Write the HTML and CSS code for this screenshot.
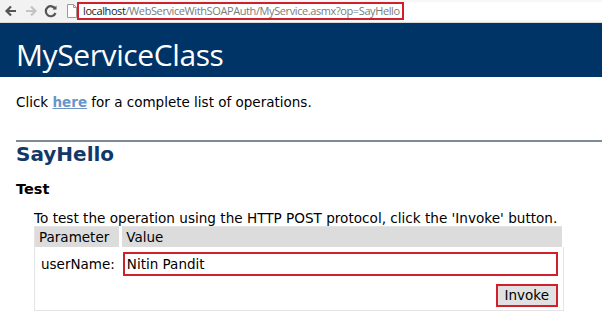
FILE: index.html
```html
<!DOCTYPE html>
<html lang="en">
<head>
    <meta charset="UTF-8">
    <meta name="viewport" content="width=device-width, initial-scale=1.0">
    <title>MyServiceClass Web Service</title>
    <link rel="stylesheet" href="styles.css">
</head>
<body>
    <div class="toolbar">
        <div class="nav">
            <svg class="nav-icon" width="14" height="14" viewBox="0 0 14 14">
                <path d="M12 7H3M7 2.5L2.5 7L7 11.5" fill="none" stroke="#555" stroke-width="2.2"/>
            </svg>
            <svg class="nav-icon" width="14" height="14" viewBox="0 0 14 14">
                <path d="M2 7H11M7 2.5L11.5 7L7 11.5" fill="none" stroke="#c4c4c4" stroke-width="2.2"/>
            </svg>
            <svg class="nav-icon" width="14" height="14" viewBox="0 0 14 14">
                <path d="M11.3 5A5 5 0 1 0 11.5 9" fill="none" stroke="#555" stroke-width="2.2"/>
                <path d="M8.5 5.5H12.5V1.5Z" fill="#555"/>
            </svg>
            <svg class="page-icon" width="10" height="14" viewBox="0 0 10 14">
                <path d="M0.5 0.5H6.5L9.5 3.5V13.5H0.5Z" fill="#fff" stroke="#9a9a9a"/>
                <path d="M6.5 0.5V3.5H9.5" fill="none" stroke="#9a9a9a"/>
            </svg>
        </div>
        <div class="address">
            <span class="url"><span class="host">localhost</span>/WebServiceWithSOAPAuth/MyService.asmx?op=SayHello</span>
        </div>
    </div>

    <div class="banner">
        <h1 class="heading1">MyServiceClass</h1>
    </div>

    <div class="content">
        <p class="intro">Click <a href="#">here</a> for a complete list of operations.</p>

        <hr class="rule">

        <h2 class="op-name">SayHello</h2>

        <h3 class="test-title">Test</h3>

        <p class="frmtext">To test the operation using the HTTP POST protocol, click the 'Invoke' button.</p>

        <table class="frm">
            <tr>
                <td class="frm-header param-col">Parameter</td>
                <td class="frm-header">Value</td>
            </tr>
            <tr>
                <td class="frm-label">userName:</td>
                <td class="frm-value"><input class="frm-input" type="text" value="Nitin Pandit"></td>
            </tr>
            <tr>
                <td></td>
                <td class="frm-actions"><button class="invoke-btn" type="button">Invoke</button></td>
            </tr>
        </table>
    </div>
</body>
</html>
```

FILE: styles.css
```css
* {
    margin: 0;
    padding: 0;
    box-sizing: border-box;
}

body {
    font-family: 'DejaVu Sans', Verdana, sans-serif;
    background: white;
    color: #000;
    width: 602px;
    height: 318px;
    overflow: hidden;
}

.toolbar {
    height: 23px;
    display: flex;
    align-items: center;
    background: #f7f7f7;
    border-bottom: 1px solid #d9d9d9;
}

.nav {
    display: flex;
    align-items: center;
    height: 100%;
    padding-left: 4px;
    background: #f2f2f2;
}

.nav-icon {
    margin-right: 6px;
}

.page-icon {
    margin-left: 3px;
    margin-right: 0;
}

.address {
    flex: 1;
    height: 18px;
    background: white;
    font-family: 'Open Sans', 'Noto Sans', sans-serif;
    font-size: 11px;
    line-height: 14px;
    color: #7b7b7b;
    white-space: nowrap;
}

.url {
    display: inline-block;
    width: 327px;
    height: 18px;
    padding-left: 4px;
    border: 2px solid #d0202c;
    letter-spacing: -0.4px;
    overflow: hidden;
}

.host {
    color: #222;
}

.banner {
    background: #003366;
    height: 54px;
    padding-left: 16px;
    padding-top: 12px;
}

.heading1 {
    color: #fff;
    font-family: 'Open Sans', 'Noto Sans', sans-serif;
    font-size: 30px;
    font-weight: normal;
    letter-spacing: -0.4px;
    line-height: 40px;
}

.content {
    padding-left: 16px;
}

.intro {
    font-size: 13.5px;
    margin-top: 17px;
}

.intro a {
    color: #6d94c6;
    font-weight: bold;
    text-decoration: underline;
}

.rule {
    border: none;
    border-top: 2px solid #7d8a99;
    margin-top: 30px;
}

.op-name {
    color: #12386a;
    font-size: 20px;
    font-weight: bold;
    margin-top: 0;
}

.test-title {
    font-size: 14.5px;
    font-weight: bold;
    margin-top: 15px;
}

.frmtext {
    font-size: 13.6px;
    margin-left: 18px;
    margin-top: 13px;
}

.frm {
    margin-left: 18px;
    width: 531px;
    border-collapse: collapse;
    border: 1px solid #e4e4e4;
    font-size: 13.5px;
}

.frm-header {
    background: #dcdcdc;
    height: 20px;
    padding: 0 4px;
    border-right: 3px solid white;
}

.param-col {
    width: 86px;
}

.frm-label {
    padding: 5px 6px 0;
}

.frm-value {
    padding: 5px 5px 0 2px;
}

.frm-input {
    width: 100%;
    height: 24px;
    border: 2px solid #d0202c;
    font-family: 'DejaVu Sans', Verdana, sans-serif;
    font-size: 13.5px;
    padding: 0 2px;
}

.frm-actions {
    text-align: right;
    padding: 8px 5px 3px;
}

.invoke-btn {
    font-family: 'DejaVu Sans', Verdana, sans-serif;
    font-size: 13.5px;
    background: #e1e1e1;
    border: 2px solid #d0202c;
    height: 23px;
    padding: 0 7px;
}
```
